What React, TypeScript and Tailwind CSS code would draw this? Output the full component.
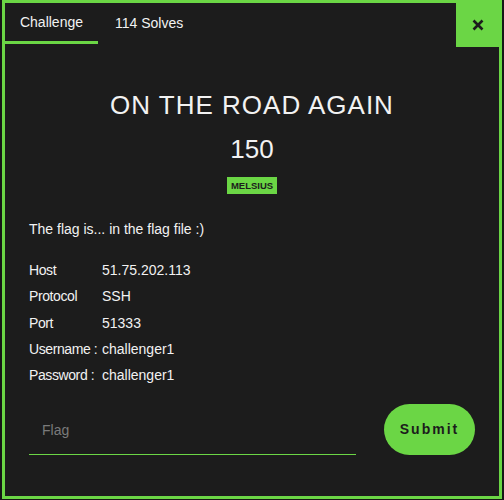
import React from 'react'

const font = { fontFamily: '"Liberation Sans", Arial, sans-serif' }

const rows = [
  ['Host', '51.75.202.113'],
  ['Protocol', 'SSH'],
  ['Port', '51333'],
  ['Username :', 'challenger1'],
  ['Password :', 'challenger1'],
]

const App = () => {
  return (
    <div className="w-[504px] h-[500px] bg-[#161616] overflow-hidden" style={font}>
      <div className="ml-[2px] w-[500px] h-[499px] border-[3px] border-[#6bd645] bg-[#1c1c1c] flex flex-col text-[#f2f2f2]">
        <div className="flex h-[44px] items-start">
          <div className="w-[93px] h-[41px] border-b-[3px] border-[#6bd645] flex items-center justify-center text-[14px]">
            Challenge
          </div>
          <div className="h-[41px] flex items-center ml-[17px] text-[14px]">114 Solves</div>
          <button className="ml-auto w-[43px] h-[44px] bg-[#6bd645] flex items-center justify-center">
            <svg width="12" height="12" viewBox="0 0 12 12">
              <path d="M1.5 1.5 L10.5 10.5 M10.5 1.5 L1.5 10.5" stroke="#1c1c1c" strokeWidth="2.6" />
            </svg>
          </button>
        </div>

        <div className="flex flex-col items-center mt-[41px]">
          <h1 className="text-[26px] leading-[34px] tracking-[1px]">ON THE ROAD AGAIN</h1>
          <div className="text-[26px] leading-[30px] mt-[12px]">150</div>
          <span className="mt-[13px] bg-[#6bd645] text-[#1c1c1c] text-[9.5px] font-bold leading-[17px] px-[4px]">MELSIUS</span>
        </div>

        <div className="px-[24px] mt-[26px] text-[14px]">
          <p className="leading-[18px]">The flag is... in the flag file :)</p>
          <div className="mt-[23px] flex flex-col gap-[8.25px]">
            {rows.map(([k, v]) => (
              <div key={k} className="flex leading-[18px]">
                <span className="w-[73px] whitespace-nowrap tracking-[-0.4px]">{k}</span>
                <span>{v}</span>
              </div>
            ))}
          </div>
        </div>

        <div className="flex items-center px-[24px] mt-[20px]">
          <div className="w-[327px] h-[50px] border-b border-[#6bd645] flex items-center">
            <input
              placeholder="Flag"
              className="w-full bg-transparent outline-none px-[13px] text-[14px] placeholder:text-[#7a7a7a] mt-[2px]"
              style={font}
            />
          </div>
          <button className="ml-auto w-[91px] h-[51px] rounded-full bg-[#6bd645] text-[#1c1c1c] font-bold text-[14px] tracking-[2px]" style={font}>
            Submit
          </button>
        </div>
      </div>
    </div>
  )
}

export default App
